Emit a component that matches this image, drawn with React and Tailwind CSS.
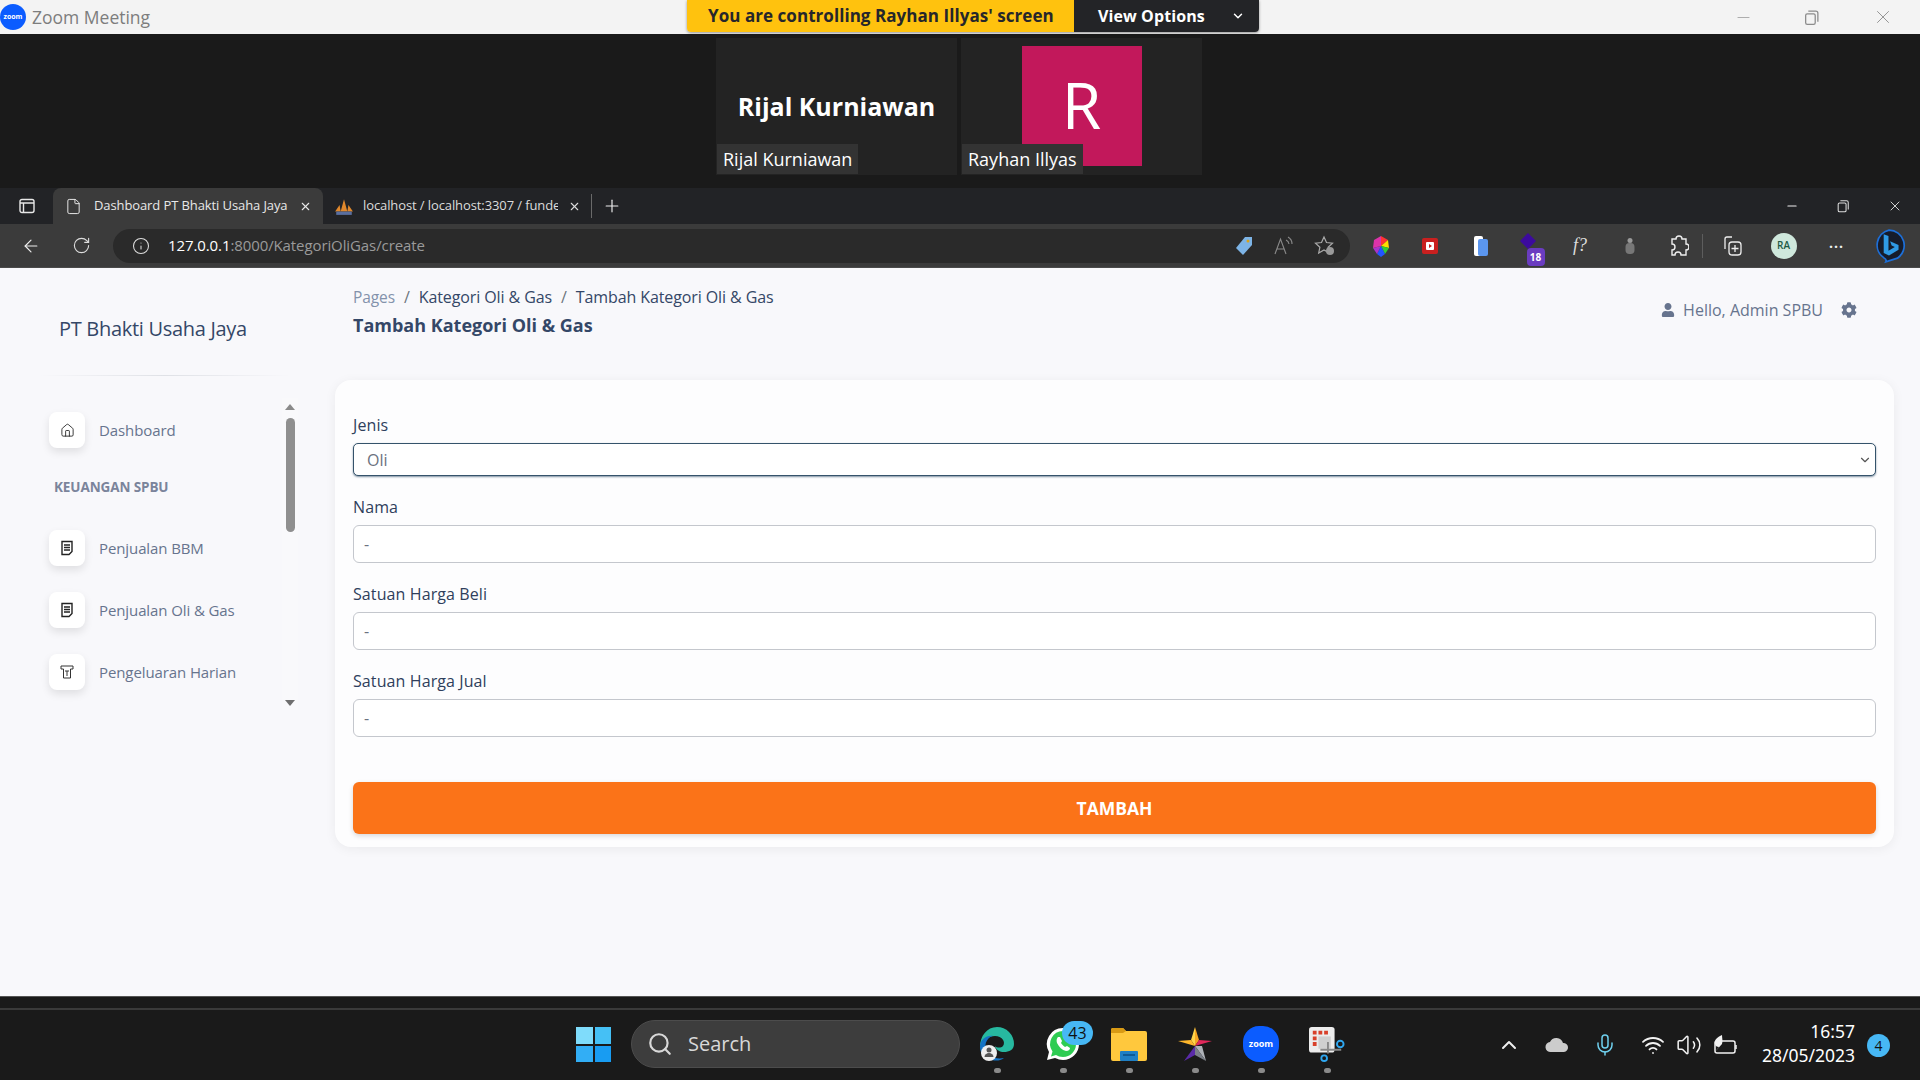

import React from "react";
import { House, Info, ArrowLeft, RotateCw, ChevronDown, ChevronUp, Plus, X, Minus, Search, Mic, Wifi, Volume2, File } from "lucide-react";
import { FaUser, FaCog } from "react-icons/fa";

const Restore = ({ s = 16, c = "#888" }) => (
  <svg width={s} height={s} viewBox="0 0 16 16" fill="none" stroke={c} strokeWidth="1.2">
    <rect x="2.5" y="4.5" width="9" height="10" rx="1.5" />
    <path d="M5 2h7a2 2 0 0 1 2 2v8" />
  </svg>
);

const Doc = () => (
  <svg width="14" height="16" viewBox="0 0 14 16" fill="none" stroke="#222" strokeWidth="1.4">
    <path d="M2 1.5h10v10l-3 3H2z" fill="#fff" />
    <path d="M4 5h6M4 7.5h6M4 10h6" />
  </svg>
);

const Till = () => (
  <svg width="14" height="14" viewBox="0 0 14 14" fill="none" stroke="#333" strokeWidth="1">
    <path d="M1 1h12v3h-2.500v9h-7V4H1z" />
    <path d="M5 6h4M7 6v5" />
  </svg>
);

const Nav = ({ icon, label }) => (
  <div className="flex items-center h-9 pl-[9px]">
    <div className="w-9 h-9 rounded-lg bg-white shadow-[0_4px_8px_rgba(0,0,0,0.1)] flex items-center justify-center">{icon}</div>
    <span className="ml-3.5 text-[15px] text-[#67748e] tracking-[-0.1px]">{label}</span>
  </div>
);

const Field = ({ label, top }) => (
  <div className={top}>
    <div className="text-[16px] font-medium tracking-[0.1px] text-[#2f3f5c] h-[20px] leading-[18px]">{label}</div>
    <div className="mt-[7px] h-[38px] rounded-md border border-[#c4c7cd] bg-white flex items-center px-2.5 text-[16px] text-[#6b7280]">-</div>
  </div>
);

const Tile = ({ name, children }) => (
  <div className="relative w-[241px] h-[137px] bg-[#232323] flex items-center justify-center">
    {children}
    <div className="absolute left-[1px] bottom-[1px] h-[30px] px-1.5 bg-[#333333] text-white text-[18px] leading-[30px]">{name}</div>
  </div>
);

const Tool = ({ w, children }) => <div className={`${w} flex items-center justify-center`}>{children}</div>;

const TaskIcon = ({ children }) => (
  <div className="w-[66px] h-full flex flex-col items-center relative">
    <div className="h-[36px] w-[36px] mt-[16px] flex items-center justify-center relative">{children}</div>
    <div className="w-[7px] h-[5px] rounded-full bg-[#8a8a8a] mt-[6px]"></div>
  </div>
);

export default function App() {
  return (
    <div className="w-[1920px] h-[1080px] overflow-hidden flex flex-col bg-[#1a1a1a] font-['Open_Sans',sans-serif]">
      {/* Zoom title bar */}
      <div className="h-[34px] shrink-0 bg-[#f3f3f3] flex items-start relative">
        <div className="w-[26px] h-[26px] mt-1 rounded-full bg-[#0b5cff] flex items-center justify-center text-white text-[7px] font-bold">zoom</div>
        <div className="ml-1.5 mt-[5px] text-[17.500px] leading-[24px] text-[#7d7d7d]">Zoom Meeting</div>
        <div className="absolute left-[687px] top-0 h-[32px] w-[572px] flex rounded-b-[4px] overflow-hidden shadow-[0_1px_3px_rgba(0,0,0,0.4)]">
          <div className="w-[387px] bg-[#ffc20e] text-[#26262b] text-[17px] tracking-[0.05px] font-bold leading-[32px] pl-[21px] whitespace-nowrap">You are controlling Rayhan Illyas' screen</div>
          <div className="flex-1 bg-[#232427] text-white text-[16px] tracking-[0.1px] font-bold leading-[32px] pl-6 flex items-center">
            View Options
            <ChevronDown size={14} className="ml-[26px]" strokeWidth={2.5} />
          </div>
        </div>
        <div className="ml-auto flex items-center h-[34px] pr-[26px]">
          <Minus size={19} color="#999" strokeWidth={1} className="mr-[50px]" />
          <Restore s={17} c="#8c8c8c" />
          <X size={22} color="#8c8c8c" strokeWidth={1} className="ml-[52px]" />
        </div>
      </div>

      {/* Zoom gallery */}
      <div className="h-[154px] shrink-0 bg-[#1a1a1a] pt-1 flex justify-center gap-[4px] pr-[2px]">
        <Tile name="Rijal Kurniawan">
          <span className="text-white text-[25px] font-bold">Rijal Kurniawan</span>
        </Tile>
        <Tile name="Rayhan Illyas">
          <div className="w-[120px] h-[120px] -mt-[1px] pb-[3px] bg-[#c2185b] flex items-center justify-center text-white text-[64px] leading-none">R</div>
        </Tile>
      </div>

      {/* Edge tabs */}
      <div className="h-[36px] shrink-0 bg-[#222326] flex items-end">
        <div className="w-[53px] h-[36px] flex items-center justify-center">
          <svg width="16" height="16" viewBox="0 0 16 16" fill="none" stroke="#e8e8e8" strokeWidth="1.4"><rect x="1" y="1.5" width="14" height="13" rx="2" /><path d="M1 5h14M4.500 5v9.500" /></svg>
        </div>
        <div className="w-[270px] h-[36px] bg-[#3b3b3b] rounded-t-lg flex items-center text-[13px] text-[#e8e8e8] tracking-[-0.1px]">
          <File size={17} className="ml-3" strokeWidth={1.4} />
          <span className="ml-[12px] w-[205px] whitespace-nowrap">Dashboard PT Bhakti Usaha Jaya</span>
          <X size={13} />
        </div>
        <div className="w-[268px] h-[36px] flex items-center text-[13px] text-[#dcdcdc] tracking-[-0.1px] relative">
          <svg width="20" height="20" viewBox="0 0 18 18" className="ml-[11px]"><path d="M1 14 5 8l1 6zM6 14l3-11 3 11zM12 14l1-6 4 6z" fill="#e0882c" /><rect x="2" y="14" width="14" height="3" fill="#5a6f9f" /></svg>
          <span className="ml-[9px] w-[195px] overflow-hidden whitespace-nowrap">localhost / localhost:3307 / funde</span>
          <X size={13} className="ml-[10px]" />
        </div>
        <div className="w-px h-[24px] bg-[#6a6a6a] mb-1.5"></div>
        <div className="w-[40px] h-[36px] flex items-center justify-center"><Plus size={20} color="#eee" strokeWidth={1.4} /></div>
        <div className="ml-auto h-[36px] flex items-center pr-[17px] gap-[37px]">
          <Minus size={14} color="#eee" />
          <Restore s={14} c="#ddd" />
          <X size={16} color="#ddd" strokeWidth={1.4} />
        </div>
      </div>

      {/* Edge toolbar */}
      <div className="h-[44px] shrink-0 bg-[#3b3b3b] flex items-center border-b border-[#4a4a4a]">
        <div className="w-[62px] flex justify-center"><ArrowLeft size={20} color="#eee" strokeWidth={1.4} /></div>
        <div className="w-[38px] flex justify-center"><RotateCw size={19} color="#ddd" strokeWidth={1.4} /></div>
        <div className="w-[1237px] ml-[13px] h-[34px] rounded-full bg-[#2a2a2a] flex items-center">
          <Info size={18} color="#ddd" strokeWidth={1.4} className="ml-[19px]" />
          <span className="ml-[18px] text-[15px] tracking-[-0.1px] text-white">127.0.0.1<span className="text-[#9a9a9a]">:8000/KategoriOliGas/create</span></span>
          <div className="ml-auto flex items-center gap-[18px] pr-[14px]">
            <svg width="20" height="20" viewBox="0 0 20 20"><path d="M11 1h7v8l-9 10-7-7z" fill="#7db4e6" /><circle cx="14" cy="5" r="1.500" fill="#d9a21a" /></svg>
            <svg width="24" height="20" viewBox="0 0 24 20" fill="none" stroke="#8a8a8a" strokeWidth="1.1"><path d="M3 18 8.500 3 14 18M5 13h7" /><path d="M14 4a5 5 0 0 1 3 4M16 1a8 8 0 0 1 4 7" /></svg>
            <svg width="22" height="22" viewBox="0 0 22 22" fill="none" stroke="#aaa" strokeWidth="1.2"><path d="M10 2l2.500 5.500 6 .7-4.400 4 1.200 5.800L10 15l-5.300 3 1.200-5.800-4.400-4 6-.7z" /><circle cx="16" cy="16" r="4" fill="#999" stroke="none" /></svg>
          </div>
        </div>
        <div className="flex items-center ml-[6px]">
          <Tool w="w-[49px]">
            <svg width="20" height="24" viewBox="0 0 20 24"><path d="M10 12 10 2 17 6z" fill="#f33" /><path d="M10 12 17 6 18 14z" fill="#fd0" /><path d="M10 12 18 14 14 20z" fill="#3c3" /><path d="M10 12 14 20 10 23 6 20z" fill="#25f" /><path d="M10 12 6 20 2 14z" fill="#a3c" /><path d="M10 12 2 14 3 6 10 2z" fill="#d3a" /></svg>
          </Tool>
          <Tool w="w-[50px]">
            <svg width="18" height="20" viewBox="0 0 18 20"><rect x="1" y="2" width="16" height="16" rx="2" fill="#c9201f" /><rect x="5" y="6" width="8" height="8" rx="1" fill="#fff" /><path d="M8 8l3 2-3 2z" fill="#c9201f" /></svg>
          </Tool>
          <Tool w="w-[51px]">
            <svg width="16" height="22" viewBox="0 0 16 22"><rect x="1" y="1" width="9" height="20" rx="2" fill="#fff" /><rect x="5" y="4" width="10" height="17" rx="2" fill="#5b96ee" /></svg>
          </Tool>
          <Tool w="w-[49px]">
            <div className="relative w-[28px] h-[28px]">
              <svg width="20" height="22" viewBox="0 0 20 22" className="absolute left-[2px] top-0"><path d="M9 1l8 8-8 8-8-8z" fill="#3c0a9e" /></svg>
              <div className="absolute right-[0px] bottom-[-6px] w-[18px] h-[18px] rounded-sm bg-[#6a3cc0] text-white text-[10px] font-bold leading-[18px] text-center">18</div>
            </div>
          </Tool>
          <Tool w="w-[50px]"><span className="text-[#ddd] italic text-[18px] font-['Liberation_Serif',serif]">f?</span></Tool>
          <Tool w="w-[49px]">
            <svg width="12" height="18" viewBox="0 0 12 18"><circle cx="6" cy="3.500" r="2.500" fill="#999" /><rect x="1.500" y="6" width="9" height="11" rx="4" fill="#777" /></svg>
          </Tool>
          <Tool w="w-[50px]">
            <svg width="20" height="24" viewBox="0 0 20 24" fill="none" stroke="#eee" strokeWidth="1.4"><path d="M7 5a3 3 0 0 1 6 0h4v5a3 3 0 0 1 0 6v5h-5a3 3 0 0 0-6 0H3v-5a3 3 0 0 0 0-6V5z" /></svg>
          </Tool>
          <div className="w-px h-[24px] bg-[#5d5d5d] mr-[5px] ml-[-2px]"></div>
          <Tool w="w-[50px]">
            <svg width="22" height="22" viewBox="0 0 22 22" fill="none" stroke="#eee" strokeWidth="1.3"><path d="M10 2H5a2 2 0 0 0-2 2v10" /><rect x="7" y="7" width="12" height="13" rx="3" /><path d="M13 10v7M9.500 13.500h7" /></svg>
          </Tool>
          <Tool w="w-[51px]"><div className="w-[26px] h-[26px] rounded-full bg-[#cfe8dc] text-[#1d5a45] text-[10px] font-semibold flex items-center justify-center">RA</div></Tool>
          <Tool w="w-[55px]"><span className="text-[#eee] text-[14px] font-bold leading-none tracking-[1px] -mt-[6px]">...</span></Tool>
          <Tool w="w-[50px]">
            <svg width="36" height="36" viewBox="0 0 34 34" fill="none"><path d="M17 2a14.500 14.500 0 0 1 8 26.500L14 32c1-2 0-3-2-4A14.500 14.500 0 0 1 17 2z" stroke="#1d6fd8" strokeWidth="1.6" fill="#161c2b" /><path d="M12 6l4.500 1.500v14l6-3.500-3-1.500-1.500-4 8 3.500v4.500l-9 5.500-5-2.500z" fill="#2f9be6" /></svg>
          </Tool>
        </div>
      </div>

      {/* Page */}
      <div className="h-[728px] shrink-0 bg-[#f8f8fb] flex">
        <aside className="w-[335px] shrink-0 flex flex-col">
          <div className="h-[107px] pl-[59px] pt-[48px] text-[20px] leading-[26px] text-[#344767] tracking-[-0.3px] whitespace-nowrap">PT Bhakti Usaha Jaya</div>
          <div className="h-px mx-[40px] w-[250px] bg-gradient-to-r from-transparent via-[#dfe1e6] to-transparent"></div>
          <div className="mt-[22px] h-[312px] flex">
            <div className="w-[282px] pl-[40px] flex flex-col pt-[14px] overflow-hidden">
              <Nav icon={<House size={15} color="#222" strokeWidth={1.4} />} label="Dashboard" />
              <div className="mt-[30px] ml-[14px] h-[18px] text-[13.500px] leading-[18px] font-bold text-[#7b849b] tracking-[-0.1px]">KEUANGAN SPBU</div>
              <div className="mt-[34px] flex flex-col gap-[26px]">
                <Nav icon={<Doc />} label="Penjualan BBM" />
                <Nav icon={<Doc />} label="Penjualan Oli & Gas" />
                <Nav icon={<Till />} label="Pengeluaran Harian" />
              </div>
            </div>
            <div className="w-4 h-full bg-[#f9f9fb] flex flex-col items-center justify-between pt-[6px] pb-[4px]">
              <div className="w-0 h-0 border-x-[5px] border-x-transparent border-b-[6px] border-b-[#8a8a8a]"></div>
              <div className="w-[9px] h-[114px] rounded-full bg-[#8f8f8f] mb-[160px]"></div>
              <div className="w-0 h-0 border-x-[5px] border-x-transparent border-t-[6px] border-t-[#6f6f6f]"></div>
            </div>
          </div>
        </aside>
        <main className="flex-1 pr-[26px]">
          <div className="h-[112px] pl-[18px] flex items-start relative">
            <div>
              <div className="mt-[19px] h-5 text-[16px] leading-5 text-[#344767] tracking-[-0.1px] whitespace-nowrap">
                <span className="text-[#8392ab] text-[15.500px]">Pages</span>
                <span className="text-[#6c757d] mx-[9px]">/</span>Kategori Oli &amp; Gas
                <span className="text-[#6c757d] mx-[9px]">/</span>Tambah Kategori Oli &amp; Gas
              </div>
              <div className="mt-[6px] text-[18px] leading-[24px] font-bold text-[#344767]">Tambah Kategori Oli &amp; Gas</div>
            </div>
            <div className="ml-auto mt-[30px] pr-[37px] h-[24px] flex items-center text-[#67748e] text-[16px] font-medium">
              <FaUser size={14} />
              <span className="ml-[8px]">Hello, Admin SPBU</span>
              <FaCog size={16} className="ml-[18px]" />
            </div>
          </div>
          <div className="h-[467px] rounded-2xl bg-[#fdfdfe] shadow-[0_2px_12px_rgba(0,0,0,0.06)] px-[18px] pt-[35px]">
            <div className="text-[16px] font-medium tracking-[0.1px] text-[#2f3f5c] h-[20px] leading-[20px]">Jenis</div>
            <div className="mt-[8px] h-[33px] rounded-[5px] border border-[#35536b] shadow-[0_1px_2px_rgba(40,70,100,0.6)] bg-white flex items-center pl-[13px] pr-[3px] text-[16px] text-[#6b7280]">
              Oli
              <ChevronDown size={14} className="ml-auto" strokeWidth={2} color="#555" />
            </div>
            <Field label="Nama" top="mt-[22px]" />
            <Field label="Satuan Harga Beli" top="mt-[22px]" />
            <Field label="Satuan Harga Jual" top="mt-[22px]" />
            <div className="mt-[45px] h-[52px] rounded-md bg-[#fb7318] shadow-[0_2px_5px_rgba(0,0,0,0.15)] flex items-center justify-center text-white text-[17.500px] font-bold">TAMBAH</div>
          </div>
        </main>
      </div>

      {/* Taskbar */}
      <div className="flex-1 bg-[#1a1a1a] border-t-[1px] border-[#555] flex flex-col">
        <div className="h-[11px] shrink-0"></div>
        <div className="h-[2px] shrink-0 bg-[#3a3a3a]"></div>
        <div className="flex-1 relative flex items-stretch">
          <div className="ml-[575px] w-[37px] flex items-center justify-center">
            <div className="grid grid-cols-2 gap-[2px] w-[35px] h-[35px] -mt-[1px]">
              <div className="bg-[#7fdcfb]"></div><div className="bg-[#45c0f5]"></div>
              <div className="bg-[#32aef5]"></div><div className="bg-[#189cf2]"></div>
            </div>
          </div>
          <div className="ml-[19px] mt-[10px] w-[329px] h-[48px] rounded-full bg-[#3d3d3d] border border-[#4c4c4c] flex items-center text-[#d8d8d8] text-[20px]">
            <Search size={26} strokeWidth={2} className="ml-[15px]" />
            <span className="ml-[15px]">Search</span>
          </div>
          <div className="ml-[4px] flex">
            <TaskIcon>
              <svg width="36" height="36" viewBox="0 0 36 36"><path d="M18 1a17 17 0 0 1 17 17c0 6-5 8-10 8-4 0-8-2-9-6 2 2 6 2 8 0 3-4-1-10-8-10C9 10 3 15 1 21 1 10 8 1 18 1z" fill="#27b9a0" /><path d="M1 21c0-8 7-12 13-11-5 1-9 7-7 13 2 6 8 11 18 9-4 3-8 3-12 2C6 33 1 28 1 21z" fill="#1473c4" /><circle cx="10" cy="27" r="8" fill="#eee" /><circle cx="10" cy="24" r="2.500" fill="#555" /><path d="M5.500 31a4.500 4 0 0 1 9 0z" fill="#555" /></svg>
            </TaskIcon>
            <TaskIcon>
              <svg width="38" height="38" viewBox="0 0 36 36"><path d="M18 2a16 16 0 0 1 0 32c-3 0-5-.7-8-2l-8 2 2-8A16 16 0 0 1 18 2z" fill="#fff" /><path d="M18 5a13 13 0 0 1 0 26c-3 0-5-.8-7-2l-5 1.500 1.500-5A13 13 0 0 1 18 5z" fill="#2ecc52" /><path d="M13 11c-1 1-2 3-1 6 2 4 5 7 9 8 3 0 4-2 4-3l-3-2-2 1c-2-1-3-3-4-4l1-2-2-4z" fill="#fff" /></svg>
              <div className="absolute left-[17px] top-[-5px] w-[31px] h-[24px] rounded-full bg-[#47b8f5] text-[#111] text-[16px] leading-[24px] text-center">43</div>
            </TaskIcon>
            <TaskIcon>
              <svg width="36" height="36" viewBox="0 0 36 36"><path d="M0 4a2 2 0 0 1 2-2h10l3 3h19a2 2 0 0 1 2 2v26a2 2 0 0 1-2 2H2a2 2 0 0 1-2-2z" fill="#ffc83d" /><path d="M0 4a2 2 0 0 1 2-2h10l3 3-3 2H0z" fill="#d99a14" /><rect x="9" y="25" width="18" height="10" rx="1" fill="#1f7fc4" /><rect x="12" y="28" width="12" height="2" fill="#0f5a94" /></svg>
            </TaskIcon>
            <TaskIcon>
              <svg width="36" height="36" viewBox="0 0 36 36"><path d="M18 1l4 13-4 6z" fill="#f5a623" /><path d="M18 1l-4 13 4 6z" fill="#ffd54a" /><path d="M22 14l13 1-17 5z" fill="#e0275a" /><path d="M14 14 1 15l17 5z" fill="#ffb72b" /><path d="M18 20l11 15-4-15z" fill="#aeb2b8" /><path d="M18 20 7 35l11-6z" fill="#5a2aa8" /><path d="M18 20v9l11 6z" fill="#7a7f88" /></svg>
            </TaskIcon>
            <TaskIcon>
              <div className="w-[36px] h-[36px] rounded-[16px] bg-[#0b5cff] flex items-center justify-center text-white text-[9px] font-bold">zoom</div>
            </TaskIcon>
            <TaskIcon>
              <svg width="38" height="36" viewBox="0 0 38 36"><rect x="0" y="0" width="27" height="27" rx="3" fill="#ececec" /><path d="M4 4h4v4H4zM10 4h4v4h-4zM16 4h4v4h-4zM4 10h4v4H4zM4 16h4v4H4z" fill="#d8402a" /><rect x="10" y="10" width="13" height="13" fill="#cfcfcf" /><path d="M20 16v12M12 24h22" stroke="#888" strokeWidth="2" /><circle cx="33" cy="18" r="3.500" fill="none" stroke="#2fa7f0" strokeWidth="2" /><circle cx="16" cy="33" r="3" fill="none" stroke="#2fa7f0" strokeWidth="2" /></svg>
            </TaskIcon>
          </div>
          <div className="absolute right-[30px] top-0 bottom-0 flex items-center">
            <ChevronUp size={24} color="#eee" strokeWidth={2} className="mr-[24px]" />
            <svg width="24" height="16" viewBox="0 0 24 16" className="mr-[24px]"><path d="M6 15a5 5 0 0 1-1-10 7 7 0 0 1 13 1 4.500 4.500 0 0 1 1 9z" fill="#ccc" /></svg>
            <Mic size={24} color="#6fd0ee" strokeWidth={1.5} className="mr-[24px]" />
            <Wifi size={24} color="#f2f2f2" strokeWidth={1.8} className="mr-[11px]" />
            <Volume2 size={26} color="#f2f2f2" strokeWidth={1.4} className="mr-[10px]" />
            <svg width="26" height="22" viewBox="0 0 26 22" fill="none" stroke="#f2f2f2" strokeWidth="1.5" className="mr-[22px]"><rect x="3" y="7" width="20" height="12" rx="2" /><path d="M24 11v4" /><path d="M1 20 10 10c1-3 0-6 0-9-4 2-8 4-7 9 0 2 2 3 4 3z" fill="#f2f2f2" stroke="none" /></svg>
            <div className="text-right text-white text-[17.500px] leading-[24px] w-[95px] -mt-[4px] font-['Noto_Sans',sans-serif] whitespace-nowrap">
              <div>16:57</div>
              <div className="-ml-2">28/05/2023</div>
            </div>
            <div className="ml-[12px] w-[23px] h-[23px] rounded-full bg-[#47b8f5] text-[#111] text-[14px] flex items-center justify-center">4</div>
          </div>
        </div>
      </div>
    </div>
  );
}
